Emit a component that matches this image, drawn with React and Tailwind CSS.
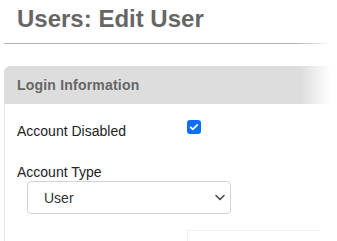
export default function App() {
  return (
    <div className="w-[337px] h-[241px] overflow-hidden bg-white pl-[4px] font-['Liberation_Sans',Arial,sans-serif]">
      <h1 className="pt-[5px] pl-[13px] text-[24px] leading-[28px] font-bold text-[#666]">Users: Edit User</h1>
      <div className="mt-[10px] h-[1px] w-[326px] bg-[linear-gradient(to_right,#b3b3b3_0%,#b3b3b3_90%,#ffffff_100%)]"></div>
      <div className="mt-[22px]">
        <div className="h-[38px] rounded-tl-[6px] flex items-center pl-[13px] bg-[linear-gradient(to_right,#dddddd_0%,#dddddd_89%,#ffffff_98%)]">
          <span className="text-[14px] leading-[16px] font-bold text-[#666] tracking-[0.2px]">Login Information</span>
        </div>
        <div className="border-l border-[#e6e6e6] pl-[12px] pt-[16px] h-[140px]">
          <div className="flex h-[20px]">
            <span className="w-[170px] mt-[3px] text-[14px] leading-[16px] text-[#222]">Account Disabled</span>
            <div className="w-[14px] h-[14px] rounded-[3px] bg-[#0d6efd] flex items-center justify-center">
              <svg width="12" height="12" viewBox="0 0 20 20">
                <path d="M4.5 10.5l3.5 3.5 7.5-7.5" fill="none" stroke="#fff" strokeWidth="3" strokeLinecap="round" strokeLinejoin="round" />
              </svg>
            </div>
          </div>
          <div className="mt-[24px] text-[14px] leading-[16px] text-[#222]">Account Type</div>
          <div className="mt-[1px] ml-[10px] w-[204px] h-[33px] border border-[#ced4da] rounded-[4px] flex items-center justify-between pl-[16px] pr-[5px]">
            <span className="text-[14px] leading-[16px] text-[#333]">User</span>
            <svg width="10" height="7" viewBox="0 0 10 7">
              <path d="M1 1.5l4 4 4-4" fill="none" stroke="#444" strokeWidth="1.5" strokeLinecap="round" strokeLinejoin="round" />
            </svg>
          </div>
          <div className="mt-[16px] ml-[170px] w-[134px] h-[12px] border-t border-l border-[#f0f0f0] rounded-tl-[2px]"></div>
        </div>
      </div>
    </div>
  );
}
